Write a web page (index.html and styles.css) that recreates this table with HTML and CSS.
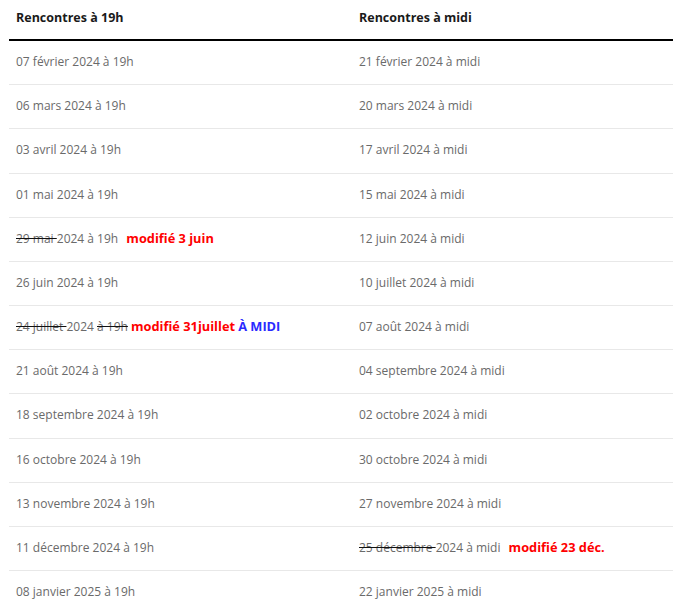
FILE: index.html
```html
<!DOCTYPE html>
<html lang="fr">
<head>
<meta charset="utf-8">
<link rel="stylesheet" href="styles.css">
</head>
<body>
<div class="wrap">
<table class="schedule">
  <thead>
    <tr><th class="c1">Rencontres à 19h</th><th class="c2">Rencontres à midi</th></tr>
  </thead>
  <tbody>
    <tr><td>07 février 2024 à 19h</td><td>21 février 2024 à midi</td></tr>
    <tr><td>06 mars 2024 à 19h</td><td>20 mars 2024 à midi</td></tr>
    <tr><td>03 avril 2024 à 19h</td><td>17 avril 2024 à midi</td></tr>
    <tr><td>01 mai 2024 à 19h</td><td>15 mai 2024 à midi</td></tr>
    <tr><td><s>29 mai </s>2024 à 19h <span class="mod gap">modifié 3 juin</span></td><td>12 juin 2024 à midi</td></tr>
    <tr><td>26 juin 2024 à 19h</td><td>10 juillet 2024 à midi</td></tr>
    <tr><td><s>24 juillet </s>2024 <s>à 19h</s> <span class="mod">modifié 31juillet</span> <span class="blue">À MIDI</span></td><td>07 août 2024 à midi</td></tr>
    <tr><td>21 août 2024 à 19h</td><td>04 septembre 2024 à midi</td></tr>
    <tr><td>18 septembre 2024 à 19h</td><td>02 octobre 2024 à midi</td></tr>
    <tr><td>16 octobre 2024 à 19h</td><td>30 octobre 2024 à midi</td></tr>
    <tr><td>13 novembre 2024 à 19h</td><td>27 novembre 2024 à midi</td></tr>
    <tr><td>11 décembre 2024 à 19h</td><td><s>25 décembre </s>2024 à midi <span class="mod gap">modifié 23 déc.</span></td></tr>
    <tr><td>08 janvier 2025 à 19h</td><td>22 janvier 2025 à midi</td></tr>
  </tbody>
</table>
</div>
</body>
</html>
```
FILE: styles.css
```css
html, body {
  margin: 0;
  padding: 0;
  background: #fff;
}
.wrap {
  padding-left: 9px;
  width: 664px;
}
.schedule {
  width: 664px;
  border-collapse: collapse;
  table-layout: fixed;
  font-family: "Open Sans", "Noto Sans", sans-serif;
  font-size: 12px;
}
.schedule th {
  text-align: left;
  font-weight: 700;
  font-size: 12.5px;
  color: #1a1a1a;
  line-height: 19px;
  padding: 8px 7px 12px;
  border-bottom: 2px solid #000;
}
.schedule th.c1 { width: 329px; }
.schedule td {
  color: #6a6a6a;
  line-height: 19.17px;
  padding: 11px 7px 13px;
  border-bottom: 1px solid #e8e8e8;
  white-space: nowrap;
}
.schedule tbody tr:last-child td { border-bottom: none; }
.schedule s {
  text-decoration-color: #111;
}
.mod {
  color: #f00;
  font-weight: 700;
  font-size: 12.8px;
}
.gap { margin-left: 5px; }
.blue {
  color: #2a2aff;
  font-weight: 700;
  font-size: 12.8px;
}
```
